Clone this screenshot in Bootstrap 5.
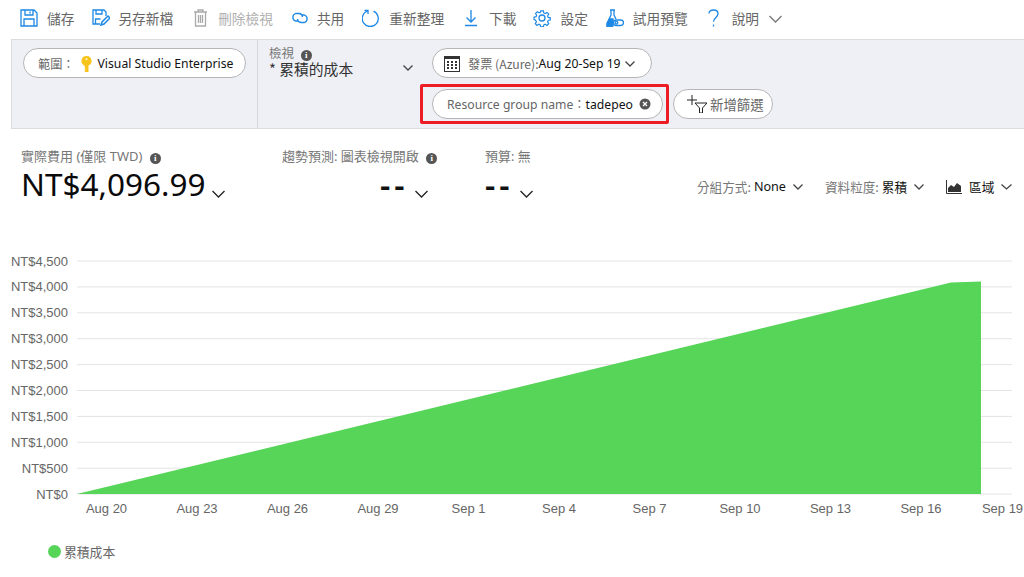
<!DOCTYPE html>
<html lang="zh-Hant">
<head>
    <meta charset="UTF-8">
    <title>累積的成本</title>
    <link rel="stylesheet" href="https://cdn.jsdelivr.net/npm/bootstrap@5.3.0/dist/css/bootstrap.min.css">
    <style>
        html, body { height: 577px; overflow: hidden; }
        body {
            background: #fff;
            color: #111;
            font-family: "Noto Sans", "Noto Sans CJK TC", sans-serif;
            font-size: 13px;
        }
        .cjk-ui { font-family: "Noto Sans CJK TC", "Noto Sans", sans-serif; }
        .top-bar { height: 39px; padding: 0 0 2px 20px; gap: 18px; color: #666; font-size: 13.7px; }
        .top-item { gap: 9px; white-space: nowrap; }
        .top-item.is-off { color: #b0b0b0; }
        .gap-8 { gap: 8px; }
        .gap-10 { gap: 10px; }
        .gap-12 { gap: 12px; }
        .gap-13 { gap: 13px; }
        .push-2 { margin-left: 2px; }
        .push-3 { margin-left: 3px; }
        .pull-1 { margin-left: -1px; }
        .ico { fill: none; stroke: #1e88e5; stroke-width: 1.3; flex: none; }
        .ico-off { stroke: #a9a9a9; }
        .ico-dark { stroke: #444; }
        .ico-black { stroke: #222; }
        .help-chev { margin-left: -8px; stroke: #777; }

        .filter-panel {
            height: 90px;
            margin-left: 11px;
            background: #eff0f6;
            border: 1px solid #dcdce0;
            border-right: 0;
        }
        .scope-col { width: 246px; padding: 8px 0 0 11px; border-right: 1px solid #d8d8dc; flex: none; }
        .view-col { width: 174px; padding: 6px 0 0 11px; flex: none; }
        .pill-col { padding-top: 8px; gap: 11px; }
        .pill {
            height: 30px;
            padding-top: 2px;
            background: #fff;
            border: 1px solid #b5b5b5;
            border-radius: 15px;
            color: #111;
            white-space: nowrap;
            font-size: 12.2px;
        }
        .pill-scope { width: 223px; padding-left: 14px; gap: 6px; }
        .pill-date { width: 220px; padding-left: 11px; }
        .pill-filter { width: 231px; padding-left: 14px; }
        .pill-add { width: 100px; padding-left: 12px; margin-left: 4px; color: #666; font-size: 13.4px; }
        .pill-label { color: #666; }
        .pill-x { margin-left: 6px; margin-bottom: 2px; }
        .add-ico { margin-right: 3px; margin-bottom: 3px; }
        .add-text { margin-bottom: 2px; }
        .red-box {
            border: 3px solid #ed1c24;
            border-radius: 2px;
            padding: 2px 3px 2px 9px;
            margin: -5px 0 -5px -12px;
        }
        .view-label { color: #777; font-size: 12.5px; line-height: 14px; }
        .view-name { font-size: 14.8px; line-height: 17px; color: #333; margin-top: -1px; }
        .view-chev { margin-right: 19px; }
        .info-dot {
            display: inline-flex;
            align-items: center;
            justify-content: center;
            width: 11px;
            height: 11px;
            border-radius: 50%;
            background: #555;
            color: #fff;
            font: bold 9px "Liberation Serif", serif;
            vertical-align: 0;
        }

        .summary-row { height: 93px; }
        .cost-col { padding-top: 20px; flex: none; }
        .cost-1 { width: 282px; padding-left: 21px; }
        .cost-2 { width: 203px; }
        .cost-3 { width: 212px; }
        .cost-label { color: #777; font-size: 13px; line-height: 15px; white-space: nowrap; }
        .cost-big { font-size: 31.5px; line-height: 40px; color: #0a0a0a; white-space: nowrap; }
        .cost-big svg { margin: 0 0 0 7px; vertical-align: -2px; }
        .cost-dash { font-size: 32px; line-height: 40px; font-weight: 600; margin-top: 1px; white-space: nowrap; letter-spacing: 4px; }
        .cost-dash svg { margin-left: 7px; vertical-align: -1px; }
        .cost-2 .cost-dash { padding-left: 98px; }
        .side-ctrls { padding-top: 49px; gap: 22px; font-size: 12.6px; white-space: nowrap; align-items: flex-start; }
        .side-ctrls .lbl { color: #777; }
        .side-ctrls b { font-weight: 400; color: #111; }
        .side-item { gap: 3px; }
        .side-area { gap: 7px; }

        .chart-box { width: 1024px; height: 345px; display: block; }
        .chart-box text { font-family: "Liberation Sans", sans-serif; font-size: 13px; fill: #666; }
        .grid-line { stroke: #e4e4e4; stroke-width: 1; }
        .legend-row { margin-left: 48px; gap: 3px; color: #666; font-size: 12.8px; margin-top: -25px; }
        .legend-dot { width: 13px; height: 13px; border-radius: 50%; background: #56d558; }
    </style>
</head>
<body>
    <div class="top-bar d-flex align-items-center cjk-ui">
        <div class="top-item d-flex align-items-center">
            <svg class="ico" width="18" height="18" viewBox="0 0 18 18"><path d="M1 1h13l3 3v13H1z"/><path d="M5 1v5h8V1M4 17v-7h10v7M10 2.500v2"/></svg>
            <span>儲存</span>
        </div>
        <div class="top-item gap-8 d-flex align-items-center">
            <svg class="ico" width="18" height="18" viewBox="0 0 18 18"><path d="M8 15H1V1h11l2 2v4"/><path d="M4 1v4h6V1M3.500 15v-5h5"/><path d="M9 16l1-3 6-6 2 2-6 6z" stroke-width="1.500"/></svg>
            <span>另存新檔</span>
        </div>
        <div class="top-item gap-10 is-off push-2 d-flex align-items-center">
            <svg class="ico ico-off" width="15" height="18" viewBox="0 0 15 18"><path d="M1 3h13M5 3V1h5v2M2.500 3v14h10V3M5.500 6v8M7.500 6v8M9.500 6v8"/></svg>
            <span>刪除檢視</span>
        </div>
        <div class="top-item gap-8 d-flex align-items-center">
            <svg class="ico" width="18" height="14" viewBox="0 0 18 14"><path d="M7 10H4.500a4 4 0 0 1 0-7.500H8a3.800 3.800 0 0 1 3.500 3.500"/><path d="M11 4h2.500a4 4 0 0 1 0 7.500H10A3.800 3.800 0 0 1 6.500 8"/></svg>
            <span>共用</span>
        </div>
        <div class="top-item d-flex align-items-center">
            <svg class="ico" width="18" height="18" viewBox="0 0 18 18"><path d="M11.500 2.200A8 8 0 1 1 5.500 2"/><path d="M2.500 1.500h3.500v3.500"/></svg>
            <span>重新整理</span>
        </div>
        <div class="top-item gap-12 push-3 d-flex align-items-center">
            <svg class="ico" width="12" height="18" viewBox="0 0 12 18"><path d="M6 1v12M1.500 8.500L6 13l4.500-4.500M0 16.500h12"/></svg>
            <span>下載</span>
        </div>
        <div class="top-item pull-1 d-flex align-items-center">
            <svg class="ico" width="18" height="18" viewBox="0 0 18 18"><path d="M7.500 1h3l.5 2.300 1.600.7 2-1.300 2 2-1.300 2 .7 1.600 2.300.5v2.400l-2.300.5-.7 1.600 1.300 2-2 2-2-1.300-1.600.7-.5 2.300h-3l-.5-2.300-1.600-.7-2 1.300-2-2 1.300-2-.7-1.600L0 10.500V8l2.300-.5.7-1.600-1.300-2 2-2 2 1.300 1.600-.7z" transform="translate(1 1) scale(.89)"/><circle cx="9" cy="9" r="3"/></svg>
            <span>設定</span>
        </div>
        <div class="top-item d-flex align-items-center">
            <svg class="ico" width="18" height="18" viewBox="0 0 18 18"><path d="M4 1h5M5 1v5L1 14.500V17h6"/><path d="M8 1v5l2 4"/><path d="M1.500 13.500L3.500 10H7v7H1z" fill="#1e88e5"/><rect x="7.500" y="11" width="10" height="5.500" rx="2.700"/><circle cx="10.500" cy="13.700" r="1.300"/></svg>
            <span>試用預覽</span>
        </div>
        <div class="top-item gap-13 push-2 d-flex align-items-center">
            <svg class="ico" width="11" height="18" viewBox="0 0 11 18"><path d="M1 4.500C1 2 3 1 5.500 1S10 2.500 10 4.800c0 3.700-4.500 3.700-4.500 8"/><path d="M5.500 15.500v2"/></svg>
            <span>說明</span>
        </div>
        <svg class="ico help-chev" width="13" height="8" viewBox="0 0 13 8"><path d="M.5 1l6 6 6-6"/></svg>
    </div>

    <div class="filter-panel d-flex">
        <div class="scope-col">
            <div class="pill pill-scope d-flex align-items-center">
                <span class="pill-label cjk-ui">範圍：</span>
                <svg width="11" height="16" viewBox="0 0 11 16"><path d="M5.500 0a5 5 0 0 1 2 9.600V16H4l-.5-1 1-1-1-1 1-1-1-1V9.600A5 5 0 0 1 5.500 0z" fill="#f8c41c"/><circle cx="5.500" cy="3.200" r="1.100" fill="#fff3b0"/></svg>
                <span>Visual Studio Enterprise</span>
            </div>
        </div>
        <div class="view-col">
            <div class="view-label cjk-ui">檢視 <span class="info-dot ms-1">i</span></div>
            <div class="view-name d-flex align-items-center justify-content-between cjk-ui">
                <span>* 累積的成本</span>
                <svg class="ico ico-dark view-chev" width="10" height="6" viewBox="0 0 10 6"><path d="M.5.500L5 5 9.500.500"/></svg>
            </div>
        </div>
        <div class="pill-col d-flex flex-column">
            <div class="pill pill-date d-flex align-items-center">
                <svg width="16" height="16" viewBox="0 0 16 16" class="me-2"><rect width="16" height="16" fill="#333"/><rect x="1" y="3" width="14" height="12" fill="#fff"/><path d="M3 5h2v2H3zM7 5h2v2H7zM11 5h2v2h-2zM3 8h2v2H3zM7 8h2v2H7zM11 8h2v2h-2zM3 11h2v2H3zM7 11h2v2H7zM11 11h2v2h-2z" fill="#333"/></svg>
                <span class="pill-label cjk-ui">發票 (Azure):</span><span>Aug 20-Sep 19</span>
                <svg class="ico ico-dark ms-1" width="10" height="6" viewBox="0 0 10 6"><path d="M.5.500L5 5 9.500.500"/></svg>
            </div>
            <div class="d-flex align-items-center">
                <div class="red-box">
                    <div class="pill pill-filter d-flex align-items-center">
                        <span class="pill-label">Resource group name：</span><span>tadepeo</span>
                        <svg class="pill-x" width="12" height="12" viewBox="0 0 12 12"><circle cx="6" cy="6" r="5.500" fill="#555"/><path d="M4 4l4 4M8 4l-4 4" stroke="#fff" stroke-width="1.300"/></svg>
                    </div>
                </div>
                <div class="pill pill-add d-flex align-items-center">
                    <svg class="add-ico" width="21" height="18" viewBox="0 0 21 18" fill="none" stroke="#222"><path d="M6 0v10M1 5h10"/><path d="M9 8h12l-4.500 5v5h-3v-5z"/></svg>
                    <span class="add-text cjk-ui">新增篩選</span>
                </div>
            </div>
        </div>
    </div>

    <div class="summary-row d-flex">
        <div class="cost-col cost-1">
            <div class="cost-label">實際費用 (僅限 TWD) <span class="info-dot ms-1">i</span></div>
            <div class="cost-big">NT$4,096.99<svg class="ico ico-black" width="13" height="8" viewBox="0 0 13 8"><path d="M.5 1l6 6 6-6"/></svg></div>
        </div>
        <div class="cost-col cost-2">
            <div class="cost-label">趨勢預測: 圖表檢視開啟 <span class="info-dot ms-1">i</span></div>
            <div class="cost-dash">--<svg class="ico ico-black" width="13" height="8" viewBox="0 0 13 8"><path d="M.5 1l6 6 6-6"/></svg></div>
        </div>
        <div class="cost-col cost-3">
            <div class="cost-label">預算: 無</div>
            <div class="cost-dash">--<svg class="ico ico-black" width="13" height="8" viewBox="0 0 13 8"><path d="M.5 1l6 6 6-6"/></svg></div>
        </div>
        <div class="side-ctrls d-flex">
            <div class="side-item d-flex align-items-center"><span class="lbl cjk-ui">分組方式:</span><b>None</b><svg class="ico ico-dark ms-1" width="10" height="6" viewBox="0 0 10 6"><path d="M.5.500L5 5 9.500.500"/></svg></div>
            <div class="side-item d-flex align-items-center"><span class="lbl cjk-ui">資料粒度:</span><b class="cjk-ui">累積</b><svg class="ico ico-dark ms-1" width="10" height="6" viewBox="0 0 10 6"><path d="M.5.500L5 5 9.500.500"/></svg></div>
            <div class="side-area d-flex align-items-center"><svg width="16" height="14" viewBox="0 0 16 14"><path d="M.5 0v13.500H16" fill="none" stroke="#333"/><path d="M2 12V8l3-3 3 2 3-4 4 3v6z" fill="#333"/></svg><b class="cjk-ui">區域</b><svg class="ico ico-dark" width="11" height="6" viewBox="0 0 11 6"><path d="M.5.500L5.500 5l5-4.500"/></svg></div>
        </div>
    </div>

    <svg class="chart-box" viewBox="0 222 1024 345" id="chart"></svg>
    <div class="legend-row d-flex align-items-center">
        <span class="legend-dot"></span><span class="cjk-ui">累積成本</span>
    </div>

    <script>
        const chart = document.getElementById("chart");
        let out = "";
        const yLabels = ["NT$4,500", "NT$4,000", "NT$3,500", "NT$3,000", "NT$2,500", "NT$2,000", "NT$1,500", "NT$1,000", "NT$500", "NT$0"];
        yLabels.forEach((label, i) => {
            const y = 261 + i * 25.9;
            out += `<line class="grid-line" x1="77" x2="1012" y1="${y}" y2="${y}"/>`;
            out += `<text x="68" y="${y + 4.5}" text-anchor="end">${label}</text>`;
        });
        const xLabels = ["Aug 20", "Aug 23", "Aug 26", "Aug 29", "Sep 1", "Sep 4", "Sep 7", "Sep 10", "Sep 13", "Sep 16", "Sep 19"];
        xLabels.forEach((label, i) => {
            out += `<text x="${i == 10 ? 1002.5 : 106.5 + i * 90.5}" y="513" text-anchor="middle">${label}</text>`;
        });
        out += `<path d="M77 494L951 282.500 981 281.500V494z" fill="#56d558"/>`;
        chart.innerHTML = out;
    </script>
    <script src="https://cdn.jsdelivr.net/npm/bootstrap@5.3.0/dist/js/bootstrap.bundle.min.js"></script>
</body>
</html>
